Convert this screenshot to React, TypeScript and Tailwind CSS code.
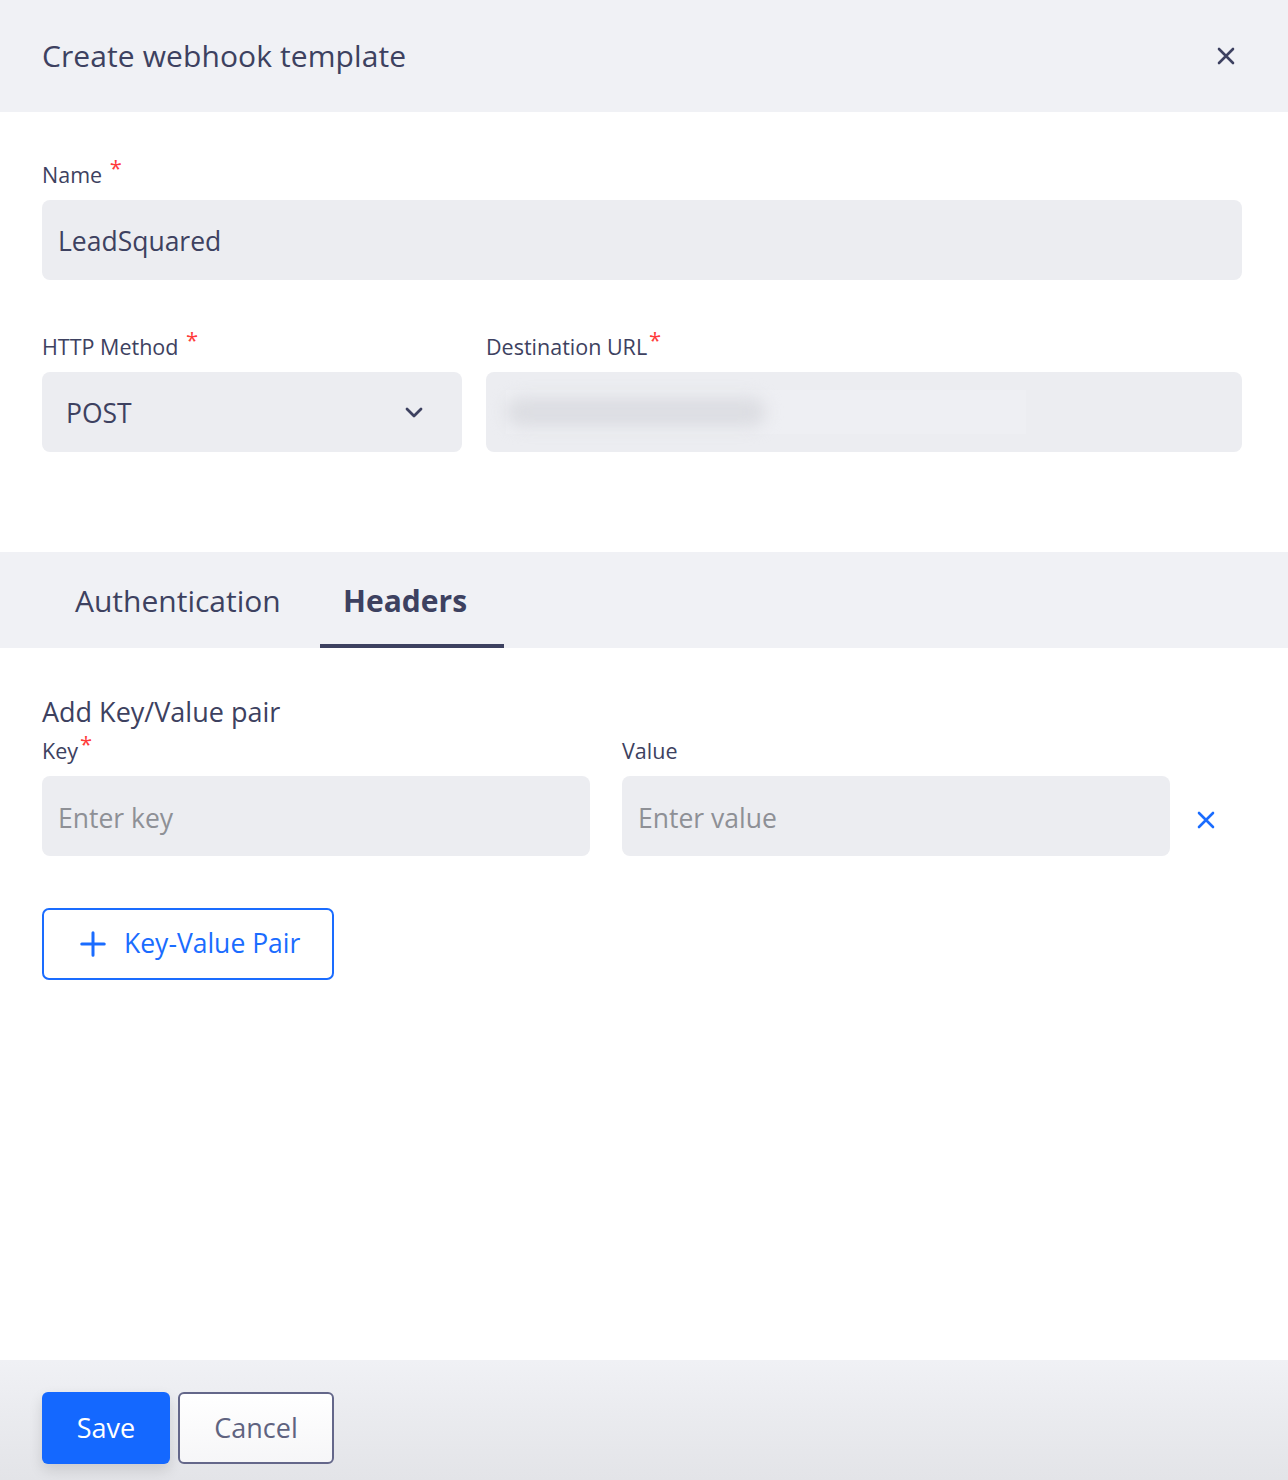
import React from "react";

const font = { fontFamily: "'Open Sans', 'Noto Sans', sans-serif" };

function Star() {
  return <span className="text-[#ff3b3b] text-[22px] leading-none align-top relative -top-[4px] ml-[2px]">*</span>;
}

function CloseIcon({ className }: { className?: string }) {
  return (
    <svg viewBox="0 0 24 24" className={className} fill="none" stroke="currentColor" strokeWidth={2.6} strokeLinecap="round">
      <path d="M5 5l14 14M19 5L5 19" />
    </svg>
  );
}

export default function App() {
  return (
    <div className="w-[1288px] h-[1480px] flex flex-col bg-white text-[#3d4160]" style={font}>
      <header className="h-[112px] bg-[#f0f1f5] flex items-center justify-between pl-[42px] pr-[50px]">
        <h1 className="text-[30px] font-normal tracking-[0.1px] -mt-[2px]">Create webhook template</h1>
        <CloseIcon className="w-[24px] h-[24px] text-[#3d4160]" />
      </header>

      <section className="pl-[42px] pr-[46px] pt-[48px] pb-[100px] flex flex-col">
        <label className="text-[21.5px] h-[40px] leading-[30px]">
          Name <Star />
        </label>
        <div className="h-[80px] rounded-[8px] bg-[#ecedf1] flex items-center px-[16px] pt-[4px] text-[26.5px]">LeadSquared</div>

        <div className="flex gap-[24px] mt-[52px]">
          <div className="w-[420px] flex flex-col">
            <label className="text-[21.5px] h-[40px] leading-[30px]">
              HTTP Method <Star />
            </label>
            <div className="h-[80px] rounded-[8px] bg-[#ecedf1] flex items-center justify-between pl-[24px] pr-[36px] text-[26.5px]">
              <span className="pt-[4px]">POST</span>
              <svg viewBox="0 0 24 24" className="w-[24px] h-[24px]" fill="none" stroke="currentColor" strokeWidth={2.8} strokeLinecap="round" strokeLinejoin="round">
                <path d="M5 9l7 7 7-7" />
              </svg>
            </div>
          </div>
          <div className="flex-1 flex flex-col">
            <label className="text-[21.5px] h-[40px] leading-[30px]">
              Destination URL<Star />
            </label>
            <div className="h-[80px] rounded-[8px] bg-[#ecedf1] flex items-center px-[20px]">
              <div className="w-[520px] h-[44px] bg-[#eeeff3] flex items-center">
                <div className="w-[260px] h-[30px] rounded-full bg-[#dcdde2] blur-[8px]" />
              </div>
            </div>
          </div>
        </div>
      </section>

      <nav className="h-[96px] bg-[#f0f1f5] flex items-stretch pl-[34px] text-[30px]">
        <div className="w-[286px] pl-[41px] flex items-center">Authentication</div>
        <div className="w-[184px] flex items-center pl-[23px] font-bold border-b-[4px] border-[#3d4160] pt-[4px]">
          Headers
        </div>
      </nav>

      <section className="flex-1 px-[42px] pt-[46px] flex flex-col">
        <h2 className="text-[27px] leading-[36px]">Add Key/Value pair</h2>
        <div className="flex items-end gap-[32px] mt-[6px]">
          <div className="w-[548px] flex flex-col">
            <label className="text-[21.5px] h-[40px] leading-[30px]">
              Key<Star />
            </label>
            <input
              className="h-[80px] rounded-[8px] bg-[#ecedf1] px-[16px] pt-[4px] text-[26.5px] outline-none placeholder:text-[#8e9096]"
              placeholder="Enter key"
            />
          </div>
          <div className="w-[548px] flex flex-col">
            <label className="text-[21.5px] h-[40px] leading-[30px]">Value</label>
            <input
              className="h-[80px] rounded-[8px] bg-[#ecedf1] px-[16px] pt-[4px] text-[26.5px] outline-none placeholder:text-[#8e9096]"
              placeholder="Enter value"
            />
          </div>
          <div className="h-[80px] flex items-center -ml-[8px] pt-[8px]">
            <CloseIcon className="w-[24px] h-[24px] text-[#1a6cff]" />
          </div>
        </div>

        <button className="mt-[52px] w-[292px] h-[72px] rounded-[7px] border-[2px] border-[#1a6cff] text-[#1a6cff] flex items-center pl-[34px] gap-[16px] text-[26.5px]">
          <svg viewBox="0 0 24 24" className="w-[30px] h-[30px]" fill="none" stroke="currentColor" strokeWidth={2.4} strokeLinecap="round">
            <path d="M12 3v18M3 12h18" />
          </svg>
          Key-Value Pair
        </button>
      </section>

      <footer className="h-[120px] bg-gradient-to-b from-[#f0f1f5] to-[#e3e4e8] flex items-start pt-[32px] pl-[42px] gap-[8px]">
        <button className="w-[128px] h-[72px] rounded-[6px] bg-[#1468ff] text-white text-[27px] shadow-[0_6px_14px_rgba(0,0,0,0.12)]">
          Save
        </button>
        <button className="w-[156px] h-[72px] rounded-[6px] border-[2px] border-[#64678a] bg-gradient-to-b from-white to-[#f6f6f8] text-[#5f6380] text-[27px]">
          Cancel
        </button>
      </footer>
    </div>
  );
}
